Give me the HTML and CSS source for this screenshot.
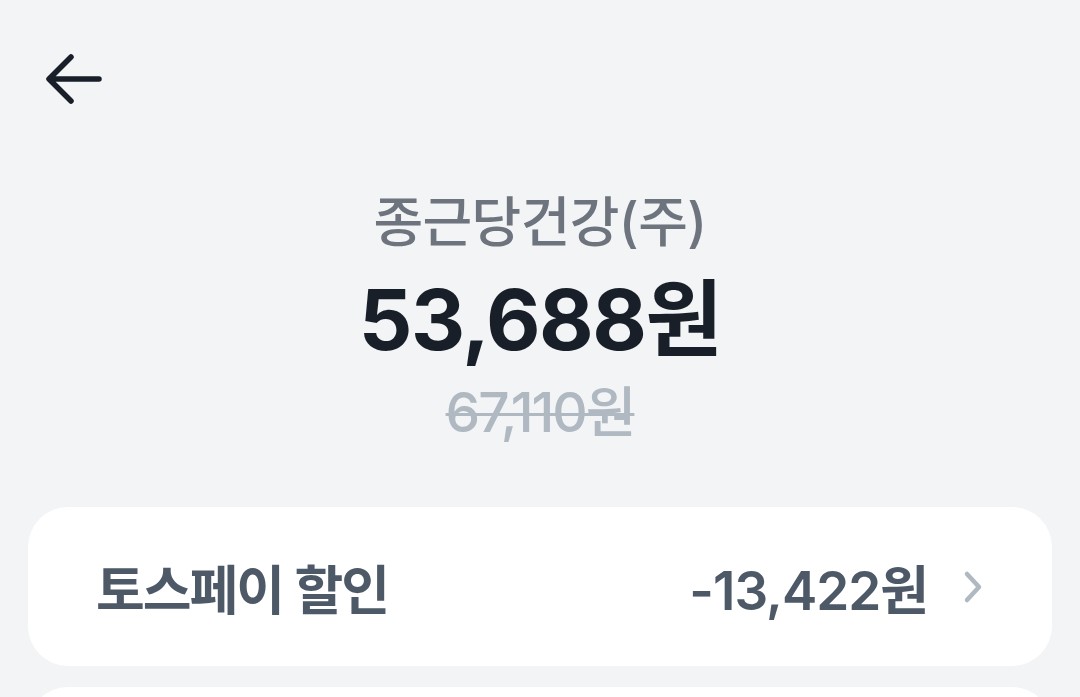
FILE: index.html
```html
<!DOCTYPE html>
<html lang="ko">
<head>
    <meta charset="UTF-8">
    <meta name="viewport" content="width=device-width, initial-scale=1.0">
    <title>결제 상세</title>
    <link rel="stylesheet" href="styles.css">
</head>
<body>
    <header class="top-bar">
        <button class="back-btn" aria-label="뒤로">
            <svg width="60" height="52" viewBox="0 0 60 52">
                <path d="M54 26H5M26 4L4 26l22 22" fill="none" stroke="#191f28" stroke-width="5.5" stroke-linecap="round" stroke-linejoin="round"/>
            </svg>
        </button>
    </header>

    <section class="summary">
        <p class="merchant">종근당건강(주)</p>
        <p class="amount">53,688원</p>
        <p class="original">67,110원</p>
    </section>

    <ul class="rows">
        <li class="row">
            <span class="row-label">토스페이 할인</span>
            <span class="row-value">-13,422원</span>
            <svg class="chevron" width="22" height="34" viewBox="0 0 22 34">
                <path d="M5 4l12 13L5 30" fill="none" stroke="#b0b8c1" stroke-width="4.5" stroke-linecap="round" stroke-linejoin="round"/>
            </svg>
        </li>
        <li class="row"></li>
    </ul>
</body>
</html>
```

FILE: styles.css
```css
body { margin: 0; background: #f2f4f6; font-family: Inter, "Noto Sans CJK KR", sans-serif; color: #191f28; overflow: hidden; }
p { margin: 0; }

.top-bar { height: 150px; padding: 53px 0 0 45px; box-sizing: border-box; }
.back-btn { border: 0; background: none; padding: 0; display: block; }

.summary { display: flex; flex-direction: column; align-items: center; }
.merchant { font-size: 54px; font-weight: 500; color: #6e747d; letter-spacing: -0.6px; line-height: 72px; margin-top: 37px; }
.amount { font-size: 84px; font-weight: 700; letter-spacing: -1.5px; line-height: 110px; margin-top: 6px; }
.original { font-size: 55px; font-weight: 500; color: #b0b8c1; text-decoration: line-through; text-decoration-thickness: 3px; letter-spacing: -2px; line-height: 60px; margin-top: 7px; }

.rows { list-style: none; margin: 65px 0 0; padding: 0 28px; display: flex; flex-direction: column; gap: 21px; }
.row { height: 159px; background: #fff; border-radius: 40px; display: flex; align-items: center; padding: 0 68px 0 68px; box-sizing: border-box; }
.row-label { font-size: 53px; font-weight: 600; color: #4e5968; letter-spacing: -2px; flex: 1; }
.row-value { font-size: 53px; font-weight: 600; color: #4e5968; letter-spacing: -1px; }
.chevron { margin-left: 34px; }
```
